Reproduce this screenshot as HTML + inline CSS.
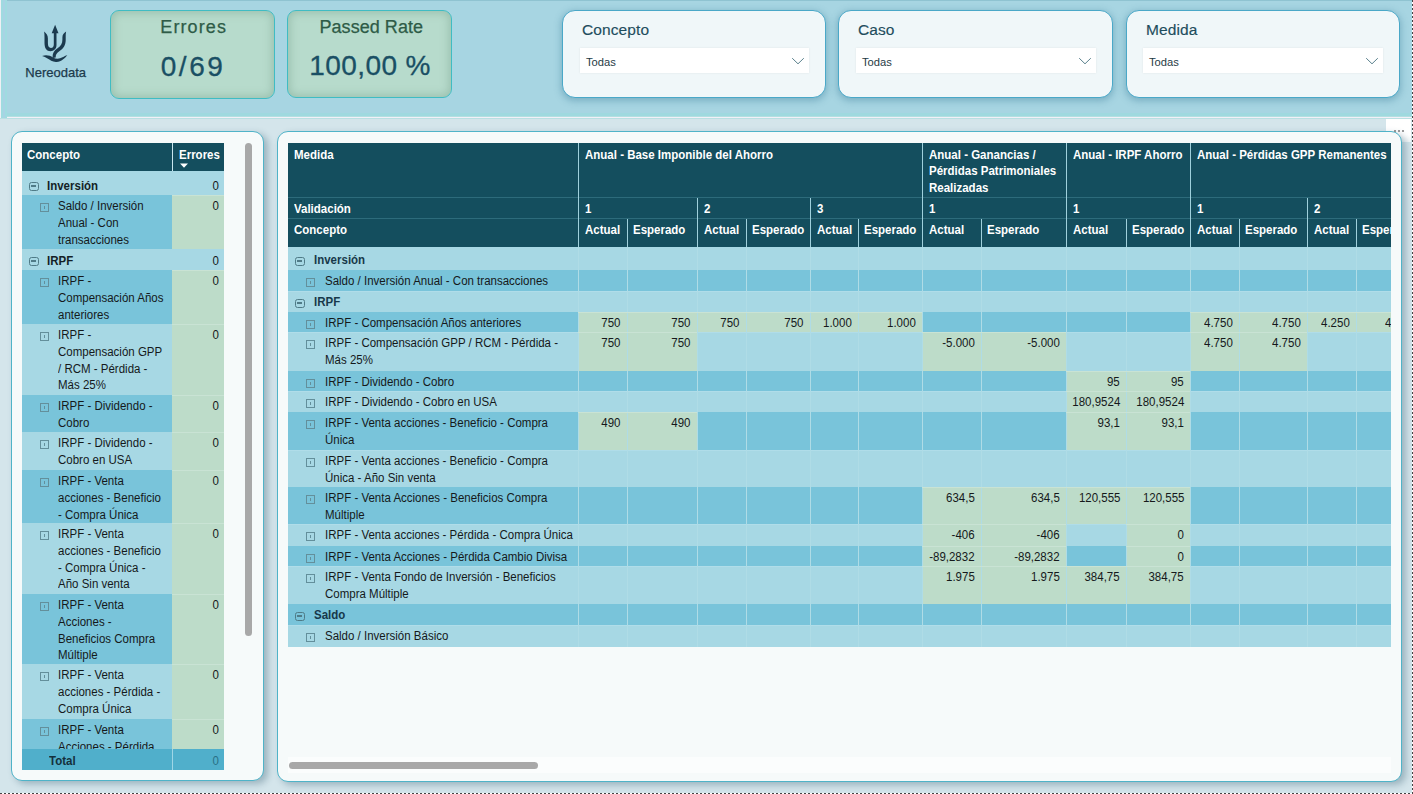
<!DOCTYPE html><html><head><meta charset="utf-8"><style>
html,body{margin:0;padding:0;}
body{width:1413px;height:794px;position:relative;overflow:hidden;background:#d4e5eb;font-family:"Liberation Sans",sans-serif;}
.t{position:absolute;white-space:nowrap;}
.tb .t.n{}
.r{position:absolute;}
.ico{position:absolute;box-sizing:border-box;}
</style></head><body>
<div class="r" style="left:0px;top:0px;width:1413px;height:117px;background:#a7d5e2;"></div>
<div class="r" style="left:0px;top:0px;width:1413px;height:1px;background:#8fc3d1;"></div>
<div class="r" style="left:0px;top:113px;width:1413px;height:3px;background:#9fd9df;"></div>
<div class="r" style="left:0px;top:116px;width:1413px;height:1px;background:#b3dfe0;"></div>
<div class="r" style="left:0px;top:117px;width:1413px;height:1px;background:#f2f0f8;"></div>
<div class="r" style="left:0px;top:118px;width:1413px;height:1px;background:#b9e0e2;"></div>
<div class="r" style="left:0px;top:119px;width:1413px;height:675px;background:#d4e5eb;"></div>
<div class="r" style="left:0px;top:0px;width:1px;height:118px;background:#eef0f4;"></div>
<div class="r" style="left:1px;top:0px;width:2px;height:118px;background:#9fdbe0;"></div>
<div class="r" style="left:3px;top:0px;width:2px;height:118px;background:#a8d3e4;"></div>
<div class="r" style="left:5px;top:0px;width:2px;height:118px;background:#9fdbe0;"></div>
<svg style="position:absolute;left:0;top:0" width="100" height="100" viewBox="0 0 100 100">
<g fill="#1b3a4e">
<path d="M44.1 31.6 C46.4 33.4 47.9 35.4 47.9 38.5 L47.9 43 C47.9 46.4 49 47.9 50.9 47.9 C52.9 47.9 53.8 46.5 53.8 44.5 L53.8 32.8 L56.5 32.8 L56.5 45 C56.5 49 53.6 51.2 50.5 51.2 C46.5 51.2 44.5 48.2 44.5 43 L44.5 37 C44.5 35 44.4 33.4 44.1 31.6 Z"/>
<path d="M66.1 31.6 C65.7 33.4 65.7 35 65.7 37 L65.7 40 C65.7 45 63.5 48.6 59.6 51.1 C56.6 53.1 55.6 54.6 55.7 57.6 L52.6 57.9 C52.3 53.6 54 50.6 57.5 48.3 C61 46 62.4 43.5 62.4 39.5 L62.4 37.5 C62.4 35 63.8 33 66.1 31.6 Z"/>
<path d="M42.1 56.1 C46 54.5 50 55.6 53 57.4 C56 59.2 59.5 59 62.5 57.3 C64.2 56.3 65.6 55.5 67.3 55.2 C65 57.9 61.5 61.6 56.5 61.9 C52.5 62.1 50 60.1 47.5 58.6 C45.8 57.5 44 56.5 42.1 56.1 Z"/>
<path d="M55.1 24.8 L58.5 33.3 L51.7 33.3 Z"/>
</g>
</svg>
<div class="t" style="left:25.30px;top:65.30px;font-size:13px;line-height:15px;font-weight:400;color:#1c3a4c;-webkit-text-stroke:0.25px #1c3a4c;">Nereodata</div>
<div class="r" style="left:110px;top:10px;width:165px;height:89px;box-sizing:border-box;border:1px solid #3fbcc3;border-radius:9px;background:#b7dbcc;box-shadow:inset 0 0 9px 2px rgba(120,160,140,0.45);"></div>
<div class="t" style="left:110.8px;width:165px;text-align:center;top:16px;font-size:18px;line-height:22px;color:#2e5b47;-webkit-text-stroke:0.25px #2e5b47;letter-spacing:1.1px;text-indent:0.8px">Errores</div>
<div class="t" style="left:110.4px;width:165px;text-align:center;top:50px;font-size:28px;line-height:34px;color:#1a4f64;-webkit-text-stroke:0.3px #1a4f64;letter-spacing:2.6px;text-indent:0.4px">0/69</div>
<div class="r" style="left:287px;top:10px;width:165px;height:88px;box-sizing:border-box;border:1px solid #3fbcc3;border-radius:9px;background:#b7dbcc;box-shadow:inset 0 0 9px 2px rgba(120,160,140,0.45);"></div>
<div class="t" style="left:288.2px;width:165px;text-align:center;top:16px;font-size:18px;line-height:22px;color:#2e5b47;-webkit-text-stroke:0.25px #2e5b47;letter-spacing:0.05px;text-indent:1.2px">Passed Rate</div>
<div class="t" style="left:287.4px;width:165px;text-align:center;top:49px;font-size:28px;line-height:34px;color:#1a4f64;-webkit-text-stroke:0.3px #1a4f64;letter-spacing:0.4px;text-indent:0.4px">100,00 %</div>
<div class="r" style="left:562px;top:10px;width:264px;height:88px;box-sizing:border-box;border:1px solid #4aa8c8;border-radius:13px;background:#f0f7f9;box-shadow:0 2px 7px 1px rgba(40,110,140,0.35);"></div>
<div class="t" style="left:582.00px;top:20.63px;font-size:15.5px;line-height:18px;font-weight:400;color:#1e4d5d;letter-spacing:0.1px;-webkit-text-stroke:0.15px #1e4d5d;">Concepto</div>
<div class="r" style="left:580px;top:48px;width:229px;height:25px;background:#ffffff;box-shadow:0 0 2px rgba(0,0,0,0.08);"></div>
<div class="t" style="left:586.00px;top:54.62px;font-size:11.2px;line-height:15px;font-weight:400;color:#1f3b45;">Todas</div>
<svg style="position:absolute;left:791px;top:55px" width="14" height="10" viewBox="0 0 14 10"><path d="M1.2 3.2 L7 8.8 L12.8 3.2" fill="none" stroke="#5a818d" stroke-width="1"/></svg>
<div class="r" style="left:838px;top:10px;width:275px;height:88px;box-sizing:border-box;border:1px solid #4aa8c8;border-radius:13px;background:#f0f7f9;box-shadow:0 2px 7px 1px rgba(40,110,140,0.35);"></div>
<div class="t" style="left:858.00px;top:20.63px;font-size:15.5px;line-height:18px;font-weight:400;color:#1e4d5d;letter-spacing:0.1px;-webkit-text-stroke:0.15px #1e4d5d;">Caso</div>
<div class="r" style="left:856px;top:48px;width:240px;height:25px;background:#ffffff;box-shadow:0 0 2px rgba(0,0,0,0.08);"></div>
<div class="t" style="left:862.00px;top:54.62px;font-size:11.2px;line-height:15px;font-weight:400;color:#1f3b45;">Todas</div>
<svg style="position:absolute;left:1078px;top:55px" width="14" height="10" viewBox="0 0 14 10"><path d="M1.2 3.2 L7 8.8 L12.8 3.2" fill="none" stroke="#5a818d" stroke-width="1"/></svg>
<div class="r" style="left:1126px;top:10px;width:274px;height:88px;box-sizing:border-box;border:1px solid #4aa8c8;border-radius:13px;background:#f0f7f9;box-shadow:0 2px 7px 1px rgba(40,110,140,0.35);"></div>
<div class="t" style="left:1146.00px;top:20.63px;font-size:15.5px;line-height:18px;font-weight:400;color:#1e4d5d;letter-spacing:0.1px;-webkit-text-stroke:0.15px #1e4d5d;">Medida</div>
<div class="r" style="left:1143px;top:48px;width:240px;height:25px;background:#ffffff;box-shadow:0 0 2px rgba(0,0,0,0.08);"></div>
<div class="t" style="left:1149.00px;top:54.62px;font-size:11.2px;line-height:15px;font-weight:400;color:#1f3b45;">Todas</div>
<svg style="position:absolute;left:1365px;top:55px" width="14" height="10" viewBox="0 0 14 10"><path d="M1.2 3.2 L7 8.8 L12.8 3.2" fill="none" stroke="#5a818d" stroke-width="1"/></svg>
<div class="r" style="left:1386px;top:119px;width:25px;height:23px;background:linear-gradient(to bottom,#ffffff 70%,#f1f6f7)"></div>
<div class="r" style="left:11px;top:131px;width:253px;height:650px;box-sizing:border-box;border:1px solid #4fb3c8;border-radius:11px;background:#f6fafa;box-shadow:4px 3px 7px rgba(40,80,100,0.33);"></div>
<div class="r" style="left:277px;top:131px;width:1125px;height:651px;box-sizing:border-box;border:1px solid #4fb3c8;border-radius:11px;background:#f6fafa;box-shadow:4px 3px 7px rgba(40,80,100,0.33);"></div>
<div class="r" style="left:1394px;top:130px;width:2.2px;height:2.2px;background:#777;border-radius:50%"></div>
<div class="r" style="left:1398px;top:130px;width:2.2px;height:2.2px;background:#777;border-radius:50%"></div>
<div class="r" style="left:1402px;top:130px;width:2.2px;height:2.2px;background:#777;border-radius:50%"></div>
<div class="r" style="left:22px;top:143px;width:202px;height:28px;background:#144e5e;"></div>
<div class="r" style="left:172px;top:143px;width:1px;height:28px;background:#c9e6ee;"></div>
<div class="t" style="left:27.00px;top:147.24px;font-size:12.3px;line-height:16.6px;font-weight:700;color:#ffffff;transform:scaleX(0.935);transform-origin:0 0;">Concepto</div>
<div class="t" style="left:179.40px;top:147.24px;font-size:12.3px;line-height:16.6px;font-weight:700;color:#ffffff;transform:scaleX(0.935);transform-origin:0 0;">Errores</div>
<svg style="position:absolute;left:179px;top:163px" width="10" height="6" viewBox="0 0 10 6"><path d="M1 0.5 L9 0.5 L5 4.8 Z" fill="#fff"/></svg>
<div class="r tb" style="left:22px;top:171px;width:202px;height:578px;overflow:hidden">
<div class="r" style="left:0px;top:0px;width:150px;height:24px;background:#a7d8e4;"></div>
<div class="r" style="left:150px;top:0px;width:52px;height:24px;background:#a7d8e4;"></div>
<div class="ico" style="left:7px;top:11px;width:9.5px;height:9px;border:1.4px solid #4f7b87;border-radius:2.5px;"><div style="position:absolute;left:0.8px;top:2.4px;width:5px;height:2px;background:#4f7b87"></div></div>
<div class="t" style="left:24.80px;top:7.24px;font-size:12.3px;line-height:16.6px;font-weight:700;color:#141f26;transform:scaleX(0.935);transform-origin:0 0;">Inversión</div>
<div class="t n" style="right:5.00px;top:7.24px;font-size:12.3px;line-height:16.6px;font-weight:400;color:#15191b;transform:scaleX(0.935);transform-origin:100% 0;">0</div>
<div class="r" style="left:0px;top:24px;width:150px;height:54px;background:#79c4da;"></div>
<div class="r" style="left:150px;top:24px;width:52px;height:54px;background:#bddcc9;"></div>
<div class="r" style="left:150px;top:24px;width:52px;height:1px;background:#c9e3d4;"></div>
<div class="ico" style="left:18px;top:32px;width:9px;height:8.5px;border:1px solid #638f9b;"><div style="position:absolute;left:3.3px;top:1.8px;width:1.2px;height:3.4px;background:#638f9b"></div></div>
<div class="t n" style="left:36.20px;top:27.24px;font-size:12.3px;line-height:16.6px;font-weight:400;color:#15191b;transform:scaleX(0.935);transform-origin:0 0;">Saldo / Inversión</div>
<div class="t n" style="left:36.20px;top:43.94px;font-size:12.3px;line-height:16.6px;font-weight:400;color:#15191b;transform:scaleX(0.935);transform-origin:0 0;">Anual - Con</div>
<div class="t n" style="left:36.20px;top:60.64px;font-size:12.3px;line-height:16.6px;font-weight:400;color:#15191b;transform:scaleX(0.935);transform-origin:0 0;">transacciones</div>
<div class="t n" style="right:5.00px;top:27.24px;font-size:12.3px;line-height:16.6px;font-weight:400;color:#15191b;transform:scaleX(0.935);transform-origin:100% 0;">0</div>
<div class="r" style="left:0px;top:78px;width:150px;height:21px;background:#a7d8e4;"></div>
<div class="r" style="left:150px;top:78px;width:52px;height:21px;background:#a7d8e4;"></div>
<div class="ico" style="left:7px;top:86px;width:9.5px;height:9px;border:1.4px solid #4f7b87;border-radius:2.5px;"><div style="position:absolute;left:0.8px;top:2.4px;width:5px;height:2px;background:#4f7b87"></div></div>
<div class="t" style="left:24.80px;top:81.74px;font-size:12.3px;line-height:16.6px;font-weight:700;color:#141f26;transform:scaleX(0.935);transform-origin:0 0;">IRPF</div>
<div class="t n" style="right:5.00px;top:81.74px;font-size:12.3px;line-height:16.6px;font-weight:400;color:#15191b;transform:scaleX(0.935);transform-origin:100% 0;">0</div>
<div class="r" style="left:0px;top:99px;width:150px;height:54px;background:#79c4da;"></div>
<div class="r" style="left:150px;top:99px;width:52px;height:54px;background:#bddcc9;"></div>
<div class="r" style="left:150px;top:99px;width:52px;height:1px;background:#c9e3d4;"></div>
<div class="ico" style="left:18px;top:107px;width:9px;height:8.5px;border:1px solid #638f9b;"><div style="position:absolute;left:3.3px;top:1.8px;width:1.2px;height:3.4px;background:#638f9b"></div></div>
<div class="t n" style="left:36.20px;top:102.24px;font-size:12.3px;line-height:16.6px;font-weight:400;color:#15191b;transform:scaleX(0.935);transform-origin:0 0;">IRPF -</div>
<div class="t n" style="left:36.20px;top:118.94px;font-size:12.3px;line-height:16.6px;font-weight:400;color:#15191b;transform:scaleX(0.935);transform-origin:0 0;">Compensación Años</div>
<div class="t n" style="left:36.20px;top:135.64px;font-size:12.3px;line-height:16.6px;font-weight:400;color:#15191b;transform:scaleX(0.935);transform-origin:0 0;">anteriores</div>
<div class="t n" style="right:5.00px;top:102.24px;font-size:12.3px;line-height:16.6px;font-weight:400;color:#15191b;transform:scaleX(0.935);transform-origin:100% 0;">0</div>
<div class="r" style="left:0px;top:153px;width:150px;height:71px;background:#a7d8e4;"></div>
<div class="r" style="left:150px;top:153px;width:52px;height:71px;background:#bddcc9;"></div>
<div class="r" style="left:150px;top:153px;width:52px;height:1px;background:#c9e3d4;"></div>
<div class="ico" style="left:18px;top:161px;width:9px;height:8.5px;border:1px solid #638f9b;"><div style="position:absolute;left:3.3px;top:1.8px;width:1.2px;height:3.4px;background:#638f9b"></div></div>
<div class="t n" style="left:36.20px;top:156.24px;font-size:12.3px;line-height:16.6px;font-weight:400;color:#15191b;transform:scaleX(0.935);transform-origin:0 0;">IRPF -</div>
<div class="t n" style="left:36.20px;top:172.94px;font-size:12.3px;line-height:16.6px;font-weight:400;color:#15191b;transform:scaleX(0.935);transform-origin:0 0;">Compensación GPP</div>
<div class="t n" style="left:36.20px;top:189.64px;font-size:12.3px;line-height:16.6px;font-weight:400;color:#15191b;transform:scaleX(0.935);transform-origin:0 0;">/ RCM - Pérdida -</div>
<div class="t n" style="left:36.20px;top:206.34px;font-size:12.3px;line-height:16.6px;font-weight:400;color:#15191b;transform:scaleX(0.935);transform-origin:0 0;">Más 25%</div>
<div class="t n" style="right:5.00px;top:156.24px;font-size:12.3px;line-height:16.6px;font-weight:400;color:#15191b;transform:scaleX(0.935);transform-origin:100% 0;">0</div>
<div class="r" style="left:0px;top:224px;width:150px;height:37px;background:#79c4da;"></div>
<div class="r" style="left:150px;top:224px;width:52px;height:37px;background:#bddcc9;"></div>
<div class="r" style="left:150px;top:224px;width:52px;height:1px;background:#c9e3d4;"></div>
<div class="ico" style="left:18px;top:232px;width:9px;height:8.5px;border:1px solid #638f9b;"><div style="position:absolute;left:3.3px;top:1.8px;width:1.2px;height:3.4px;background:#638f9b"></div></div>
<div class="t n" style="left:36.20px;top:227.24px;font-size:12.3px;line-height:16.6px;font-weight:400;color:#15191b;transform:scaleX(0.935);transform-origin:0 0;">IRPF - Dividendo -</div>
<div class="t n" style="left:36.20px;top:243.94px;font-size:12.3px;line-height:16.6px;font-weight:400;color:#15191b;transform:scaleX(0.935);transform-origin:0 0;">Cobro</div>
<div class="t n" style="right:5.00px;top:227.24px;font-size:12.3px;line-height:16.6px;font-weight:400;color:#15191b;transform:scaleX(0.935);transform-origin:100% 0;">0</div>
<div class="r" style="left:0px;top:261px;width:150px;height:38px;background:#a7d8e4;"></div>
<div class="r" style="left:150px;top:261px;width:52px;height:38px;background:#bddcc9;"></div>
<div class="r" style="left:150px;top:261px;width:52px;height:1px;background:#c9e3d4;"></div>
<div class="ico" style="left:18px;top:269px;width:9px;height:8.5px;border:1px solid #638f9b;"><div style="position:absolute;left:3.3px;top:1.8px;width:1.2px;height:3.4px;background:#638f9b"></div></div>
<div class="t n" style="left:36.20px;top:264.24px;font-size:12.3px;line-height:16.6px;font-weight:400;color:#15191b;transform:scaleX(0.935);transform-origin:0 0;">IRPF - Dividendo -</div>
<div class="t n" style="left:36.20px;top:280.94px;font-size:12.3px;line-height:16.6px;font-weight:400;color:#15191b;transform:scaleX(0.935);transform-origin:0 0;">Cobro en USA</div>
<div class="t n" style="right:5.00px;top:264.24px;font-size:12.3px;line-height:16.6px;font-weight:400;color:#15191b;transform:scaleX(0.935);transform-origin:100% 0;">0</div>
<div class="r" style="left:0px;top:299px;width:150px;height:53px;background:#79c4da;"></div>
<div class="r" style="left:150px;top:299px;width:52px;height:53px;background:#bddcc9;"></div>
<div class="r" style="left:150px;top:299px;width:52px;height:1px;background:#c9e3d4;"></div>
<div class="ico" style="left:18px;top:307px;width:9px;height:8.5px;border:1px solid #638f9b;"><div style="position:absolute;left:3.3px;top:1.8px;width:1.2px;height:3.4px;background:#638f9b"></div></div>
<div class="t n" style="left:36.20px;top:302.24px;font-size:12.3px;line-height:16.6px;font-weight:400;color:#15191b;transform:scaleX(0.935);transform-origin:0 0;">IRPF - Venta</div>
<div class="t n" style="left:36.20px;top:318.94px;font-size:12.3px;line-height:16.6px;font-weight:400;color:#15191b;transform:scaleX(0.935);transform-origin:0 0;">acciones - Beneficio</div>
<div class="t n" style="left:36.20px;top:335.64px;font-size:12.3px;line-height:16.6px;font-weight:400;color:#15191b;transform:scaleX(0.935);transform-origin:0 0;">- Compra Única</div>
<div class="t n" style="right:5.00px;top:302.24px;font-size:12.3px;line-height:16.6px;font-weight:400;color:#15191b;transform:scaleX(0.935);transform-origin:100% 0;">0</div>
<div class="r" style="left:0px;top:352px;width:150px;height:71px;background:#a7d8e4;"></div>
<div class="r" style="left:150px;top:352px;width:52px;height:71px;background:#bddcc9;"></div>
<div class="r" style="left:150px;top:352px;width:52px;height:1px;background:#c9e3d4;"></div>
<div class="ico" style="left:18px;top:360px;width:9px;height:8.5px;border:1px solid #638f9b;"><div style="position:absolute;left:3.3px;top:1.8px;width:1.2px;height:3.4px;background:#638f9b"></div></div>
<div class="t n" style="left:36.20px;top:355.24px;font-size:12.3px;line-height:16.6px;font-weight:400;color:#15191b;transform:scaleX(0.935);transform-origin:0 0;">IRPF - Venta</div>
<div class="t n" style="left:36.20px;top:371.94px;font-size:12.3px;line-height:16.6px;font-weight:400;color:#15191b;transform:scaleX(0.935);transform-origin:0 0;">acciones - Beneficio</div>
<div class="t n" style="left:36.20px;top:388.64px;font-size:12.3px;line-height:16.6px;font-weight:400;color:#15191b;transform:scaleX(0.935);transform-origin:0 0;">- Compra Única -</div>
<div class="t n" style="left:36.20px;top:405.34px;font-size:12.3px;line-height:16.6px;font-weight:400;color:#15191b;transform:scaleX(0.935);transform-origin:0 0;">Año Sin venta</div>
<div class="t n" style="right:5.00px;top:355.24px;font-size:12.3px;line-height:16.6px;font-weight:400;color:#15191b;transform:scaleX(0.935);transform-origin:100% 0;">0</div>
<div class="r" style="left:0px;top:423px;width:150px;height:70px;background:#79c4da;"></div>
<div class="r" style="left:150px;top:423px;width:52px;height:70px;background:#bddcc9;"></div>
<div class="r" style="left:150px;top:423px;width:52px;height:1px;background:#c9e3d4;"></div>
<div class="ico" style="left:18px;top:431px;width:9px;height:8.5px;border:1px solid #638f9b;"><div style="position:absolute;left:3.3px;top:1.8px;width:1.2px;height:3.4px;background:#638f9b"></div></div>
<div class="t n" style="left:36.20px;top:426.24px;font-size:12.3px;line-height:16.6px;font-weight:400;color:#15191b;transform:scaleX(0.935);transform-origin:0 0;">IRPF - Venta</div>
<div class="t n" style="left:36.20px;top:442.94px;font-size:12.3px;line-height:16.6px;font-weight:400;color:#15191b;transform:scaleX(0.935);transform-origin:0 0;">Acciones -</div>
<div class="t n" style="left:36.20px;top:459.64px;font-size:12.3px;line-height:16.6px;font-weight:400;color:#15191b;transform:scaleX(0.935);transform-origin:0 0;">Beneficios Compra</div>
<div class="t n" style="left:36.20px;top:476.34px;font-size:12.3px;line-height:16.6px;font-weight:400;color:#15191b;transform:scaleX(0.935);transform-origin:0 0;">Múltiple</div>
<div class="t n" style="right:5.00px;top:426.24px;font-size:12.3px;line-height:16.6px;font-weight:400;color:#15191b;transform:scaleX(0.935);transform-origin:100% 0;">0</div>
<div class="r" style="left:0px;top:493px;width:150px;height:55px;background:#a7d8e4;"></div>
<div class="r" style="left:150px;top:493px;width:52px;height:55px;background:#bddcc9;"></div>
<div class="r" style="left:150px;top:493px;width:52px;height:1px;background:#c9e3d4;"></div>
<div class="ico" style="left:18px;top:501px;width:9px;height:8.5px;border:1px solid #638f9b;"><div style="position:absolute;left:3.3px;top:1.8px;width:1.2px;height:3.4px;background:#638f9b"></div></div>
<div class="t n" style="left:36.20px;top:496.24px;font-size:12.3px;line-height:16.6px;font-weight:400;color:#15191b;transform:scaleX(0.935);transform-origin:0 0;">IRPF - Venta</div>
<div class="t n" style="left:36.20px;top:512.94px;font-size:12.3px;line-height:16.6px;font-weight:400;color:#15191b;transform:scaleX(0.935);transform-origin:0 0;">acciones - Pérdida -</div>
<div class="t n" style="left:36.20px;top:529.64px;font-size:12.3px;line-height:16.6px;font-weight:400;color:#15191b;transform:scaleX(0.935);transform-origin:0 0;">Compra Única</div>
<div class="t n" style="right:5.00px;top:496.24px;font-size:12.3px;line-height:16.6px;font-weight:400;color:#15191b;transform:scaleX(0.935);transform-origin:100% 0;">0</div>
<div class="r" style="left:0px;top:548px;width:150px;height:30px;background:#79c4da;"></div>
<div class="r" style="left:150px;top:548px;width:52px;height:30px;background:#bddcc9;"></div>
<div class="r" style="left:150px;top:548px;width:52px;height:1px;background:#c9e3d4;"></div>
<div class="ico" style="left:18px;top:556px;width:9px;height:8.5px;border:1px solid #638f9b;"><div style="position:absolute;left:3.3px;top:1.8px;width:1.2px;height:3.4px;background:#638f9b"></div></div>
<div class="t n" style="left:36.20px;top:551.24px;font-size:12.3px;line-height:16.6px;font-weight:400;color:#15191b;transform:scaleX(0.935);transform-origin:0 0;">IRPF - Venta</div>
<div class="t n" style="left:36.20px;top:567.94px;font-size:12.3px;line-height:16.6px;font-weight:400;color:#15191b;transform:scaleX(0.935);transform-origin:0 0;">Acciones - Pérdida</div>
<div class="t n" style="right:5.00px;top:551.24px;font-size:12.3px;line-height:16.6px;font-weight:400;color:#15191b;transform:scaleX(0.935);transform-origin:100% 0;">0</div>
</div>
<div class="r" style="left:22px;top:749px;width:202px;height:21px;background:#50afcb;"></div>
<div class="r" style="left:172px;top:749px;width:1px;height:21px;background:#9fd6e6;"></div>
<div class="t" style="left:48.60px;top:753.24px;font-size:12.3px;line-height:16.6px;font-weight:700;color:#14303c;transform:scaleX(0.935);transform-origin:0 0;">Total</div>
<div class="t n" style="right:1194.00px;top:753.24px;font-size:12.3px;line-height:16.6px;font-weight:400;color:#2a6f86;transform:scaleX(0.935);transform-origin:100% 0;">0</div>
<div class="r" style="left:245px;top:143px;width:7px;height:493px;background:#a8a8a8;border-radius:4px"></div>
<div class="r tb" style="left:288px;top:143px;width:1103px;height:504px;overflow:hidden">
<div class="r" style="left:0px;top:0px;width:1132px;height:104px;background:#144e5e;"></div>
<div class="r" style="left:0px;top:54px;width:1132px;height:1px;background:#2d6b7b;"></div>
<div class="r" style="left:0px;top:75px;width:1132px;height:1px;background:#2d6b7b;"></div>
<div class="r" style="left:290px;top:0px;width:1px;height:104px;background:#9fd0dc;"></div>
<div class="r" style="left:634px;top:0px;width:1px;height:104px;background:#9fd0dc;"></div>
<div class="r" style="left:778px;top:0px;width:1px;height:104px;background:#9fd0dc;"></div>
<div class="r" style="left:902px;top:0px;width:1px;height:104px;background:#9fd0dc;"></div>
<div class="r" style="left:409px;top:55px;width:1px;height:49px;background:#9fd0dc;"></div>
<div class="r" style="left:522px;top:55px;width:1px;height:49px;background:#9fd0dc;"></div>
<div class="r" style="left:1019px;top:55px;width:1px;height:49px;background:#9fd0dc;"></div>
<div class="r" style="left:339px;top:76px;width:1px;height:28px;background:#9fd0dc;"></div>
<div class="r" style="left:458px;top:76px;width:1px;height:28px;background:#9fd0dc;"></div>
<div class="r" style="left:570px;top:76px;width:1px;height:28px;background:#9fd0dc;"></div>
<div class="r" style="left:693px;top:76px;width:1px;height:28px;background:#9fd0dc;"></div>
<div class="r" style="left:838px;top:76px;width:1px;height:28px;background:#9fd0dc;"></div>
<div class="r" style="left:951px;top:76px;width:1px;height:28px;background:#9fd0dc;"></div>
<div class="r" style="left:1068px;top:76px;width:1px;height:28px;background:#9fd0dc;"></div>
<div class="t" style="left:5.80px;top:3.84px;font-size:12.3px;line-height:16.6px;font-weight:700;color:#ffffff;transform:scaleX(0.935);transform-origin:0 0;">Medida</div>
<div class="t" style="left:5.80px;top:58.14px;font-size:12.3px;line-height:16.6px;font-weight:700;color:#ffffff;transform:scaleX(0.935);transform-origin:0 0;">Validación</div>
<div class="t" style="left:5.80px;top:78.74px;font-size:12.3px;line-height:16.6px;font-weight:700;color:#ffffff;transform:scaleX(0.935);transform-origin:0 0;">Concepto</div>
<div class="t" style="left:297.00px;top:3.84px;font-size:12.3px;line-height:16.6px;font-weight:700;color:#ffffff;transform:scaleX(0.935);transform-origin:0 0;">Anual - Base Imponible del Ahorro</div>
<div class="t" style="left:641.00px;top:3.84px;font-size:12.3px;line-height:16.6px;font-weight:700;color:#ffffff;transform:scaleX(0.935);transform-origin:0 0;">Anual - Ganancias /</div>
<div class="t" style="left:641.00px;top:20.24px;font-size:12.3px;line-height:16.6px;font-weight:700;color:#ffffff;transform:scaleX(0.935);transform-origin:0 0;">Pérdidas Patrimoniales</div>
<div class="t" style="left:641.00px;top:36.64px;font-size:12.3px;line-height:16.6px;font-weight:700;color:#ffffff;transform:scaleX(0.935);transform-origin:0 0;">Realizadas</div>
<div class="t" style="left:784.50px;top:3.84px;font-size:12.3px;line-height:16.6px;font-weight:700;color:#ffffff;transform:scaleX(0.935);transform-origin:0 0;">Anual - IRPF Ahorro</div>
<div class="t" style="left:909.00px;top:3.84px;font-size:12.3px;line-height:16.6px;font-weight:700;color:#ffffff;transform:scaleX(0.935);transform-origin:0 0;">Anual - Pérdidas GPP Remanentes</div>
<div class="t" style="left:297.00px;top:58.14px;font-size:12.3px;line-height:16.6px;font-weight:700;color:#ffffff;transform:scaleX(0.935);transform-origin:0 0;">1</div>
<div class="t" style="left:416.00px;top:58.14px;font-size:12.3px;line-height:16.6px;font-weight:700;color:#ffffff;transform:scaleX(0.935);transform-origin:0 0;">2</div>
<div class="t" style="left:529.00px;top:58.14px;font-size:12.3px;line-height:16.6px;font-weight:700;color:#ffffff;transform:scaleX(0.935);transform-origin:0 0;">3</div>
<div class="t" style="left:641.00px;top:58.14px;font-size:12.3px;line-height:16.6px;font-weight:700;color:#ffffff;transform:scaleX(0.935);transform-origin:0 0;">1</div>
<div class="t" style="left:784.50px;top:58.14px;font-size:12.3px;line-height:16.6px;font-weight:700;color:#ffffff;transform:scaleX(0.935);transform-origin:0 0;">1</div>
<div class="t" style="left:909.00px;top:58.14px;font-size:12.3px;line-height:16.6px;font-weight:700;color:#ffffff;transform:scaleX(0.935);transform-origin:0 0;">1</div>
<div class="t" style="left:1026.00px;top:58.14px;font-size:12.3px;line-height:16.6px;font-weight:700;color:#ffffff;transform:scaleX(0.935);transform-origin:0 0;">2</div>
<div class="t" style="left:296.50px;top:78.74px;font-size:12.3px;line-height:16.6px;font-weight:700;color:#ffffff;transform:scaleX(0.935);transform-origin:0 0;">Actual</div>
<div class="t" style="left:344.50px;top:78.74px;font-size:12.3px;line-height:16.6px;font-weight:700;color:#ffffff;transform:scaleX(0.935);transform-origin:0 0;">Esperado</div>
<div class="t" style="left:415.50px;top:78.74px;font-size:12.3px;line-height:16.6px;font-weight:700;color:#ffffff;transform:scaleX(0.935);transform-origin:0 0;">Actual</div>
<div class="t" style="left:463.50px;top:78.74px;font-size:12.3px;line-height:16.6px;font-weight:700;color:#ffffff;transform:scaleX(0.935);transform-origin:0 0;">Esperado</div>
<div class="t" style="left:528.50px;top:78.74px;font-size:12.3px;line-height:16.6px;font-weight:700;color:#ffffff;transform:scaleX(0.935);transform-origin:0 0;">Actual</div>
<div class="t" style="left:575.50px;top:78.74px;font-size:12.3px;line-height:16.6px;font-weight:700;color:#ffffff;transform:scaleX(0.935);transform-origin:0 0;">Esperado</div>
<div class="t" style="left:640.50px;top:78.74px;font-size:12.3px;line-height:16.6px;font-weight:700;color:#ffffff;transform:scaleX(0.935);transform-origin:0 0;">Actual</div>
<div class="t" style="left:698.50px;top:78.74px;font-size:12.3px;line-height:16.6px;font-weight:700;color:#ffffff;transform:scaleX(0.935);transform-origin:0 0;">Esperado</div>
<div class="t" style="left:784.50px;top:78.74px;font-size:12.3px;line-height:16.6px;font-weight:700;color:#ffffff;transform:scaleX(0.935);transform-origin:0 0;">Actual</div>
<div class="t" style="left:843.50px;top:78.74px;font-size:12.3px;line-height:16.6px;font-weight:700;color:#ffffff;transform:scaleX(0.935);transform-origin:0 0;">Esperado</div>
<div class="t" style="left:908.50px;top:78.74px;font-size:12.3px;line-height:16.6px;font-weight:700;color:#ffffff;transform:scaleX(0.935);transform-origin:0 0;">Actual</div>
<div class="t" style="left:956.50px;top:78.74px;font-size:12.3px;line-height:16.6px;font-weight:700;color:#ffffff;transform:scaleX(0.935);transform-origin:0 0;">Esperado</div>
<div class="t" style="left:1025.50px;top:78.74px;font-size:12.3px;line-height:16.6px;font-weight:700;color:#ffffff;transform:scaleX(0.935);transform-origin:0 0;">Actual</div>
<div class="t" style="left:1073.50px;top:78.74px;font-size:12.3px;line-height:16.6px;font-weight:700;color:#ffffff;transform:scaleX(0.935);transform-origin:0 0;">Esperado</div>
<div class="r" style="left:0px;top:104px;width:1132px;height:23px;background:#a7d8e4;"></div>
<div class="r" style="left:290px;top:104px;width:1px;height:23px;background:#afdce6;"></div>
<div class="r" style="left:339px;top:104px;width:1px;height:23px;background:#afdce6;"></div>
<div class="r" style="left:409px;top:104px;width:1px;height:23px;background:#afdce6;"></div>
<div class="r" style="left:458px;top:104px;width:1px;height:23px;background:#afdce6;"></div>
<div class="r" style="left:522px;top:104px;width:1px;height:23px;background:#afdce6;"></div>
<div class="r" style="left:570px;top:104px;width:1px;height:23px;background:#afdce6;"></div>
<div class="r" style="left:634px;top:104px;width:1px;height:23px;background:#afdce6;"></div>
<div class="r" style="left:693px;top:104px;width:1px;height:23px;background:#afdce6;"></div>
<div class="r" style="left:778px;top:104px;width:1px;height:23px;background:#afdce6;"></div>
<div class="r" style="left:838px;top:104px;width:1px;height:23px;background:#afdce6;"></div>
<div class="r" style="left:902px;top:104px;width:1px;height:23px;background:#afdce6;"></div>
<div class="r" style="left:951px;top:104px;width:1px;height:23px;background:#afdce6;"></div>
<div class="r" style="left:1019px;top:104px;width:1px;height:23px;background:#afdce6;"></div>
<div class="r" style="left:1068px;top:104px;width:1px;height:23px;background:#afdce6;"></div>
<div class="ico" style="left:7px;top:113.5px;width:9.5px;height:9px;border:1.4px solid #4f7b87;border-radius:2.5px;"><div style="position:absolute;left:0.8px;top:2.4px;width:5px;height:2px;background:#4f7b87"></div></div>
<div class="t" style="left:26.00px;top:109.04px;font-size:12.3px;line-height:16.6px;font-weight:700;color:#17384a;transform:scaleX(0.935);transform-origin:0 0;">Inversión</div>
<div class="r" style="left:0px;top:127px;width:1132px;height:21px;background:#79c4da;"></div>
<div class="r" style="left:290px;top:127px;width:1px;height:21px;background:#afdce6;"></div>
<div class="r" style="left:339px;top:127px;width:1px;height:21px;background:#afdce6;"></div>
<div class="r" style="left:409px;top:127px;width:1px;height:21px;background:#afdce6;"></div>
<div class="r" style="left:458px;top:127px;width:1px;height:21px;background:#afdce6;"></div>
<div class="r" style="left:522px;top:127px;width:1px;height:21px;background:#afdce6;"></div>
<div class="r" style="left:570px;top:127px;width:1px;height:21px;background:#afdce6;"></div>
<div class="r" style="left:634px;top:127px;width:1px;height:21px;background:#afdce6;"></div>
<div class="r" style="left:693px;top:127px;width:1px;height:21px;background:#afdce6;"></div>
<div class="r" style="left:778px;top:127px;width:1px;height:21px;background:#afdce6;"></div>
<div class="r" style="left:838px;top:127px;width:1px;height:21px;background:#afdce6;"></div>
<div class="r" style="left:902px;top:127px;width:1px;height:21px;background:#afdce6;"></div>
<div class="r" style="left:951px;top:127px;width:1px;height:21px;background:#afdce6;"></div>
<div class="r" style="left:1019px;top:127px;width:1px;height:21px;background:#afdce6;"></div>
<div class="r" style="left:1068px;top:127px;width:1px;height:21px;background:#afdce6;"></div>
<div class="ico" style="left:18px;top:135px;width:9px;height:8.5px;border:1px solid #638f9b;"><div style="position:absolute;left:3.3px;top:1.8px;width:1.2px;height:3.4px;background:#638f9b"></div></div>
<div class="t n" style="left:37.00px;top:130.24px;font-size:12.3px;line-height:16.6px;font-weight:400;color:#15191b;transform:scaleX(0.935);transform-origin:0 0;">Saldo / Inversión Anual - Con transacciones</div>
<div class="r" style="left:0px;top:148px;width:1132px;height:21px;background:#a7d8e4;"></div>
<div class="r" style="left:0px;top:148px;width:1132px;height:1px;background:#b0dde9;"></div>
<div class="r" style="left:290px;top:148px;width:1px;height:21px;background:#afdce6;"></div>
<div class="r" style="left:339px;top:148px;width:1px;height:21px;background:#afdce6;"></div>
<div class="r" style="left:409px;top:148px;width:1px;height:21px;background:#afdce6;"></div>
<div class="r" style="left:458px;top:148px;width:1px;height:21px;background:#afdce6;"></div>
<div class="r" style="left:522px;top:148px;width:1px;height:21px;background:#afdce6;"></div>
<div class="r" style="left:570px;top:148px;width:1px;height:21px;background:#afdce6;"></div>
<div class="r" style="left:634px;top:148px;width:1px;height:21px;background:#afdce6;"></div>
<div class="r" style="left:693px;top:148px;width:1px;height:21px;background:#afdce6;"></div>
<div class="r" style="left:778px;top:148px;width:1px;height:21px;background:#afdce6;"></div>
<div class="r" style="left:838px;top:148px;width:1px;height:21px;background:#afdce6;"></div>
<div class="r" style="left:902px;top:148px;width:1px;height:21px;background:#afdce6;"></div>
<div class="r" style="left:951px;top:148px;width:1px;height:21px;background:#afdce6;"></div>
<div class="r" style="left:1019px;top:148px;width:1px;height:21px;background:#afdce6;"></div>
<div class="r" style="left:1068px;top:148px;width:1px;height:21px;background:#afdce6;"></div>
<div class="ico" style="left:7px;top:156px;width:9.5px;height:9px;border:1.4px solid #4f7b87;border-radius:2.5px;"><div style="position:absolute;left:0.8px;top:2.4px;width:5px;height:2px;background:#4f7b87"></div></div>
<div class="t" style="left:26.00px;top:151.24px;font-size:12.3px;line-height:16.6px;font-weight:700;color:#17384a;transform:scaleX(0.935);transform-origin:0 0;">IRPF</div>
<div class="r" style="left:0px;top:169px;width:1132px;height:20px;background:#79c4da;"></div>
<div class="r" style="left:290px;top:169px;width:49px;height:20px;background:#bddcc9;"></div>
<div class="r" style="left:339px;top:169px;width:70px;height:20px;background:#bddcc9;"></div>
<div class="r" style="left:409px;top:169px;width:49px;height:20px;background:#bddcc9;"></div>
<div class="r" style="left:458px;top:169px;width:64px;height:20px;background:#bddcc9;"></div>
<div class="r" style="left:522px;top:169px;width:48px;height:20px;background:#bddcc9;"></div>
<div class="r" style="left:570px;top:169px;width:64px;height:20px;background:#bddcc9;"></div>
<div class="r" style="left:902px;top:169px;width:49px;height:20px;background:#bddcc9;"></div>
<div class="r" style="left:951px;top:169px;width:68px;height:20px;background:#bddcc9;"></div>
<div class="r" style="left:1019px;top:169px;width:49px;height:20px;background:#bddcc9;"></div>
<div class="r" style="left:1068px;top:169px;width:64px;height:20px;background:#bddcc9;"></div>
<div class="r" style="left:290px;top:169px;width:1px;height:20px;background:#afdce6;"></div>
<div class="r" style="left:339px;top:169px;width:1px;height:20px;background:#afdce6;"></div>
<div class="r" style="left:409px;top:169px;width:1px;height:20px;background:#afdce6;"></div>
<div class="r" style="left:458px;top:169px;width:1px;height:20px;background:#afdce6;"></div>
<div class="r" style="left:522px;top:169px;width:1px;height:20px;background:#afdce6;"></div>
<div class="r" style="left:570px;top:169px;width:1px;height:20px;background:#afdce6;"></div>
<div class="r" style="left:634px;top:169px;width:1px;height:20px;background:#afdce6;"></div>
<div class="r" style="left:693px;top:169px;width:1px;height:20px;background:#afdce6;"></div>
<div class="r" style="left:778px;top:169px;width:1px;height:20px;background:#afdce6;"></div>
<div class="r" style="left:838px;top:169px;width:1px;height:20px;background:#afdce6;"></div>
<div class="r" style="left:902px;top:169px;width:1px;height:20px;background:#afdce6;"></div>
<div class="r" style="left:951px;top:169px;width:1px;height:20px;background:#afdce6;"></div>
<div class="r" style="left:1019px;top:169px;width:1px;height:20px;background:#afdce6;"></div>
<div class="r" style="left:1068px;top:169px;width:1px;height:20px;background:#afdce6;"></div>
<div class="r" style="left:290px;top:169px;width:49px;height:1px;background:#c9e3d4;"></div>
<div class="r" style="left:339px;top:169px;width:70px;height:1px;background:#c9e3d4;"></div>
<div class="r" style="left:409px;top:169px;width:49px;height:1px;background:#c9e3d4;"></div>
<div class="r" style="left:458px;top:169px;width:64px;height:1px;background:#c9e3d4;"></div>
<div class="r" style="left:522px;top:169px;width:48px;height:1px;background:#c9e3d4;"></div>
<div class="r" style="left:570px;top:169px;width:64px;height:1px;background:#c9e3d4;"></div>
<div class="r" style="left:902px;top:169px;width:49px;height:1px;background:#c9e3d4;"></div>
<div class="r" style="left:951px;top:169px;width:68px;height:1px;background:#c9e3d4;"></div>
<div class="r" style="left:1019px;top:169px;width:49px;height:1px;background:#c9e3d4;"></div>
<div class="r" style="left:1068px;top:169px;width:64px;height:1px;background:#c9e3d4;"></div>
<div class="ico" style="left:18px;top:177px;width:9px;height:8.5px;border:1px solid #638f9b;"><div style="position:absolute;left:3.3px;top:1.8px;width:1.2px;height:3.4px;background:#638f9b"></div></div>
<div class="t n" style="left:37.00px;top:172.24px;font-size:12.3px;line-height:16.6px;font-weight:400;color:#15191b;transform:scaleX(0.935);transform-origin:0 0;">IRPF - Compensación Años anteriores</div>
<div class="t n" style="right:770.00px;top:172.24px;font-size:12.3px;line-height:16.6px;font-weight:400;color:#15191b;transform:scaleX(0.935);transform-origin:100% 0">750</div>
<div class="t n" style="right:700.00px;top:172.24px;font-size:12.3px;line-height:16.6px;font-weight:400;color:#15191b;transform:scaleX(0.935);transform-origin:100% 0">750</div>
<div class="t n" style="right:651.00px;top:172.24px;font-size:12.3px;line-height:16.6px;font-weight:400;color:#15191b;transform:scaleX(0.935);transform-origin:100% 0">750</div>
<div class="t n" style="right:587.00px;top:172.24px;font-size:12.3px;line-height:16.6px;font-weight:400;color:#15191b;transform:scaleX(0.935);transform-origin:100% 0">750</div>
<div class="t n" style="right:539.00px;top:172.24px;font-size:12.3px;line-height:16.6px;font-weight:400;color:#15191b;transform:scaleX(0.935);transform-origin:100% 0">1.000</div>
<div class="t n" style="right:475.00px;top:172.24px;font-size:12.3px;line-height:16.6px;font-weight:400;color:#15191b;transform:scaleX(0.935);transform-origin:100% 0">1.000</div>
<div class="t n" style="right:158.00px;top:172.24px;font-size:12.3px;line-height:16.6px;font-weight:400;color:#15191b;transform:scaleX(0.935);transform-origin:100% 0">4.750</div>
<div class="t n" style="right:90.00px;top:172.24px;font-size:12.3px;line-height:16.6px;font-weight:400;color:#15191b;transform:scaleX(0.935);transform-origin:100% 0">4.750</div>
<div class="t n" style="right:41.00px;top:172.24px;font-size:12.3px;line-height:16.6px;font-weight:400;color:#15191b;transform:scaleX(0.935);transform-origin:100% 0">4.250</div>
<div class="t n" style="right:-23.00px;top:172.24px;font-size:12.3px;line-height:16.6px;font-weight:400;color:#15191b;transform:scaleX(0.935);transform-origin:100% 0">4.250</div>
<div class="r" style="left:0px;top:189px;width:1132px;height:39px;background:#a7d8e4;"></div>
<div class="r" style="left:0px;top:189px;width:1132px;height:1px;background:#b0dde9;"></div>
<div class="r" style="left:290px;top:189px;width:49px;height:39px;background:#bddcc9;"></div>
<div class="r" style="left:339px;top:189px;width:70px;height:39px;background:#bddcc9;"></div>
<div class="r" style="left:634px;top:189px;width:59px;height:39px;background:#bddcc9;"></div>
<div class="r" style="left:693px;top:189px;width:85px;height:39px;background:#bddcc9;"></div>
<div class="r" style="left:902px;top:189px;width:49px;height:39px;background:#bddcc9;"></div>
<div class="r" style="left:951px;top:189px;width:68px;height:39px;background:#bddcc9;"></div>
<div class="r" style="left:290px;top:189px;width:1px;height:39px;background:#afdce6;"></div>
<div class="r" style="left:339px;top:189px;width:1px;height:39px;background:#afdce6;"></div>
<div class="r" style="left:409px;top:189px;width:1px;height:39px;background:#afdce6;"></div>
<div class="r" style="left:458px;top:189px;width:1px;height:39px;background:#afdce6;"></div>
<div class="r" style="left:522px;top:189px;width:1px;height:39px;background:#afdce6;"></div>
<div class="r" style="left:570px;top:189px;width:1px;height:39px;background:#afdce6;"></div>
<div class="r" style="left:634px;top:189px;width:1px;height:39px;background:#afdce6;"></div>
<div class="r" style="left:693px;top:189px;width:1px;height:39px;background:#afdce6;"></div>
<div class="r" style="left:778px;top:189px;width:1px;height:39px;background:#afdce6;"></div>
<div class="r" style="left:838px;top:189px;width:1px;height:39px;background:#afdce6;"></div>
<div class="r" style="left:902px;top:189px;width:1px;height:39px;background:#afdce6;"></div>
<div class="r" style="left:951px;top:189px;width:1px;height:39px;background:#afdce6;"></div>
<div class="r" style="left:1019px;top:189px;width:1px;height:39px;background:#afdce6;"></div>
<div class="r" style="left:1068px;top:189px;width:1px;height:39px;background:#afdce6;"></div>
<div class="r" style="left:290px;top:189px;width:49px;height:1px;background:#c9e3d4;"></div>
<div class="r" style="left:339px;top:189px;width:70px;height:1px;background:#c9e3d4;"></div>
<div class="r" style="left:634px;top:189px;width:59px;height:1px;background:#c9e3d4;"></div>
<div class="r" style="left:693px;top:189px;width:85px;height:1px;background:#c9e3d4;"></div>
<div class="r" style="left:902px;top:189px;width:49px;height:1px;background:#c9e3d4;"></div>
<div class="r" style="left:951px;top:189px;width:68px;height:1px;background:#c9e3d4;"></div>
<div class="ico" style="left:18px;top:197px;width:9px;height:8.5px;border:1px solid #638f9b;"><div style="position:absolute;left:3.3px;top:1.8px;width:1.2px;height:3.4px;background:#638f9b"></div></div>
<div class="t n" style="left:37.00px;top:192.24px;font-size:12.3px;line-height:16.6px;font-weight:400;color:#15191b;transform:scaleX(0.935);transform-origin:0 0;">IRPF - Compensación GPP / RCM - Pérdida -</div>
<div class="t n" style="left:37.00px;top:208.84px;font-size:12.3px;line-height:16.6px;font-weight:400;color:#15191b;transform:scaleX(0.935);transform-origin:0 0;">Más 25%</div>
<div class="t n" style="right:770.00px;top:192.24px;font-size:12.3px;line-height:16.6px;font-weight:400;color:#15191b;transform:scaleX(0.935);transform-origin:100% 0">750</div>
<div class="t n" style="right:700.00px;top:192.24px;font-size:12.3px;line-height:16.6px;font-weight:400;color:#15191b;transform:scaleX(0.935);transform-origin:100% 0">750</div>
<div class="t n" style="right:416.00px;top:192.24px;font-size:12.3px;line-height:16.6px;font-weight:400;color:#15191b;transform:scaleX(0.935);transform-origin:100% 0">-5.000</div>
<div class="t n" style="right:331.00px;top:192.24px;font-size:12.3px;line-height:16.6px;font-weight:400;color:#15191b;transform:scaleX(0.935);transform-origin:100% 0">-5.000</div>
<div class="t n" style="right:158.00px;top:192.24px;font-size:12.3px;line-height:16.6px;font-weight:400;color:#15191b;transform:scaleX(0.935);transform-origin:100% 0">4.750</div>
<div class="t n" style="right:90.00px;top:192.24px;font-size:12.3px;line-height:16.6px;font-weight:400;color:#15191b;transform:scaleX(0.935);transform-origin:100% 0">4.750</div>
<div class="r" style="left:0px;top:228px;width:1132px;height:20px;background:#79c4da;"></div>
<div class="r" style="left:778px;top:228px;width:60px;height:20px;background:#bddcc9;"></div>
<div class="r" style="left:838px;top:228px;width:64px;height:20px;background:#bddcc9;"></div>
<div class="r" style="left:290px;top:228px;width:1px;height:20px;background:#afdce6;"></div>
<div class="r" style="left:339px;top:228px;width:1px;height:20px;background:#afdce6;"></div>
<div class="r" style="left:409px;top:228px;width:1px;height:20px;background:#afdce6;"></div>
<div class="r" style="left:458px;top:228px;width:1px;height:20px;background:#afdce6;"></div>
<div class="r" style="left:522px;top:228px;width:1px;height:20px;background:#afdce6;"></div>
<div class="r" style="left:570px;top:228px;width:1px;height:20px;background:#afdce6;"></div>
<div class="r" style="left:634px;top:228px;width:1px;height:20px;background:#afdce6;"></div>
<div class="r" style="left:693px;top:228px;width:1px;height:20px;background:#afdce6;"></div>
<div class="r" style="left:778px;top:228px;width:1px;height:20px;background:#afdce6;"></div>
<div class="r" style="left:838px;top:228px;width:1px;height:20px;background:#afdce6;"></div>
<div class="r" style="left:902px;top:228px;width:1px;height:20px;background:#afdce6;"></div>
<div class="r" style="left:951px;top:228px;width:1px;height:20px;background:#afdce6;"></div>
<div class="r" style="left:1019px;top:228px;width:1px;height:20px;background:#afdce6;"></div>
<div class="r" style="left:1068px;top:228px;width:1px;height:20px;background:#afdce6;"></div>
<div class="r" style="left:778px;top:228px;width:60px;height:1px;background:#c9e3d4;"></div>
<div class="r" style="left:838px;top:228px;width:64px;height:1px;background:#c9e3d4;"></div>
<div class="ico" style="left:18px;top:236px;width:9px;height:8.5px;border:1px solid #638f9b;"><div style="position:absolute;left:3.3px;top:1.8px;width:1.2px;height:3.4px;background:#638f9b"></div></div>
<div class="t n" style="left:37.00px;top:231.24px;font-size:12.3px;line-height:16.6px;font-weight:400;color:#15191b;transform:scaleX(0.935);transform-origin:0 0;">IRPF - Dividendo - Cobro</div>
<div class="t n" style="right:271.00px;top:231.24px;font-size:12.3px;line-height:16.6px;font-weight:400;color:#15191b;transform:scaleX(0.935);transform-origin:100% 0">95</div>
<div class="t n" style="right:207.00px;top:231.24px;font-size:12.3px;line-height:16.6px;font-weight:400;color:#15191b;transform:scaleX(0.935);transform-origin:100% 0">95</div>
<div class="r" style="left:0px;top:248px;width:1132px;height:21px;background:#a7d8e4;"></div>
<div class="r" style="left:0px;top:248px;width:1132px;height:1px;background:#b0dde9;"></div>
<div class="r" style="left:778px;top:248px;width:60px;height:21px;background:#bddcc9;"></div>
<div class="r" style="left:838px;top:248px;width:64px;height:21px;background:#bddcc9;"></div>
<div class="r" style="left:290px;top:248px;width:1px;height:21px;background:#afdce6;"></div>
<div class="r" style="left:339px;top:248px;width:1px;height:21px;background:#afdce6;"></div>
<div class="r" style="left:409px;top:248px;width:1px;height:21px;background:#afdce6;"></div>
<div class="r" style="left:458px;top:248px;width:1px;height:21px;background:#afdce6;"></div>
<div class="r" style="left:522px;top:248px;width:1px;height:21px;background:#afdce6;"></div>
<div class="r" style="left:570px;top:248px;width:1px;height:21px;background:#afdce6;"></div>
<div class="r" style="left:634px;top:248px;width:1px;height:21px;background:#afdce6;"></div>
<div class="r" style="left:693px;top:248px;width:1px;height:21px;background:#afdce6;"></div>
<div class="r" style="left:778px;top:248px;width:1px;height:21px;background:#afdce6;"></div>
<div class="r" style="left:838px;top:248px;width:1px;height:21px;background:#afdce6;"></div>
<div class="r" style="left:902px;top:248px;width:1px;height:21px;background:#afdce6;"></div>
<div class="r" style="left:951px;top:248px;width:1px;height:21px;background:#afdce6;"></div>
<div class="r" style="left:1019px;top:248px;width:1px;height:21px;background:#afdce6;"></div>
<div class="r" style="left:1068px;top:248px;width:1px;height:21px;background:#afdce6;"></div>
<div class="r" style="left:778px;top:248px;width:60px;height:1px;background:#c9e3d4;"></div>
<div class="r" style="left:838px;top:248px;width:64px;height:1px;background:#c9e3d4;"></div>
<div class="ico" style="left:18px;top:256px;width:9px;height:8.5px;border:1px solid #638f9b;"><div style="position:absolute;left:3.3px;top:1.8px;width:1.2px;height:3.4px;background:#638f9b"></div></div>
<div class="t n" style="left:37.00px;top:251.24px;font-size:12.3px;line-height:16.6px;font-weight:400;color:#15191b;transform:scaleX(0.935);transform-origin:0 0;">IRPF - Dividendo - Cobro en USA</div>
<div class="t n" style="right:271.00px;top:251.24px;font-size:12.3px;line-height:16.6px;font-weight:400;color:#15191b;transform:scaleX(0.935);transform-origin:100% 0">180,9524</div>
<div class="t n" style="right:207.00px;top:251.24px;font-size:12.3px;line-height:16.6px;font-weight:400;color:#15191b;transform:scaleX(0.935);transform-origin:100% 0">180,9524</div>
<div class="r" style="left:0px;top:269px;width:1132px;height:38px;background:#79c4da;"></div>
<div class="r" style="left:290px;top:269px;width:49px;height:38px;background:#bddcc9;"></div>
<div class="r" style="left:339px;top:269px;width:70px;height:38px;background:#bddcc9;"></div>
<div class="r" style="left:778px;top:269px;width:60px;height:38px;background:#bddcc9;"></div>
<div class="r" style="left:838px;top:269px;width:64px;height:38px;background:#bddcc9;"></div>
<div class="r" style="left:290px;top:269px;width:1px;height:38px;background:#afdce6;"></div>
<div class="r" style="left:339px;top:269px;width:1px;height:38px;background:#afdce6;"></div>
<div class="r" style="left:409px;top:269px;width:1px;height:38px;background:#afdce6;"></div>
<div class="r" style="left:458px;top:269px;width:1px;height:38px;background:#afdce6;"></div>
<div class="r" style="left:522px;top:269px;width:1px;height:38px;background:#afdce6;"></div>
<div class="r" style="left:570px;top:269px;width:1px;height:38px;background:#afdce6;"></div>
<div class="r" style="left:634px;top:269px;width:1px;height:38px;background:#afdce6;"></div>
<div class="r" style="left:693px;top:269px;width:1px;height:38px;background:#afdce6;"></div>
<div class="r" style="left:778px;top:269px;width:1px;height:38px;background:#afdce6;"></div>
<div class="r" style="left:838px;top:269px;width:1px;height:38px;background:#afdce6;"></div>
<div class="r" style="left:902px;top:269px;width:1px;height:38px;background:#afdce6;"></div>
<div class="r" style="left:951px;top:269px;width:1px;height:38px;background:#afdce6;"></div>
<div class="r" style="left:1019px;top:269px;width:1px;height:38px;background:#afdce6;"></div>
<div class="r" style="left:1068px;top:269px;width:1px;height:38px;background:#afdce6;"></div>
<div class="r" style="left:290px;top:269px;width:49px;height:1px;background:#c9e3d4;"></div>
<div class="r" style="left:339px;top:269px;width:70px;height:1px;background:#c9e3d4;"></div>
<div class="r" style="left:778px;top:269px;width:60px;height:1px;background:#c9e3d4;"></div>
<div class="r" style="left:838px;top:269px;width:64px;height:1px;background:#c9e3d4;"></div>
<div class="ico" style="left:18px;top:277px;width:9px;height:8.5px;border:1px solid #638f9b;"><div style="position:absolute;left:3.3px;top:1.8px;width:1.2px;height:3.4px;background:#638f9b"></div></div>
<div class="t n" style="left:37.00px;top:272.24px;font-size:12.3px;line-height:16.6px;font-weight:400;color:#15191b;transform:scaleX(0.935);transform-origin:0 0;">IRPF - Venta acciones - Beneficio - Compra</div>
<div class="t n" style="left:37.00px;top:288.84px;font-size:12.3px;line-height:16.6px;font-weight:400;color:#15191b;transform:scaleX(0.935);transform-origin:0 0;">Única</div>
<div class="t n" style="right:770.00px;top:272.24px;font-size:12.3px;line-height:16.6px;font-weight:400;color:#15191b;transform:scaleX(0.935);transform-origin:100% 0">490</div>
<div class="t n" style="right:700.00px;top:272.24px;font-size:12.3px;line-height:16.6px;font-weight:400;color:#15191b;transform:scaleX(0.935);transform-origin:100% 0">490</div>
<div class="t n" style="right:271.00px;top:272.24px;font-size:12.3px;line-height:16.6px;font-weight:400;color:#15191b;transform:scaleX(0.935);transform-origin:100% 0">93,1</div>
<div class="t n" style="right:207.00px;top:272.24px;font-size:12.3px;line-height:16.6px;font-weight:400;color:#15191b;transform:scaleX(0.935);transform-origin:100% 0">93,1</div>
<div class="r" style="left:0px;top:307px;width:1132px;height:37px;background:#a7d8e4;"></div>
<div class="r" style="left:0px;top:307px;width:1132px;height:1px;background:#b0dde9;"></div>
<div class="r" style="left:290px;top:307px;width:1px;height:37px;background:#afdce6;"></div>
<div class="r" style="left:339px;top:307px;width:1px;height:37px;background:#afdce6;"></div>
<div class="r" style="left:409px;top:307px;width:1px;height:37px;background:#afdce6;"></div>
<div class="r" style="left:458px;top:307px;width:1px;height:37px;background:#afdce6;"></div>
<div class="r" style="left:522px;top:307px;width:1px;height:37px;background:#afdce6;"></div>
<div class="r" style="left:570px;top:307px;width:1px;height:37px;background:#afdce6;"></div>
<div class="r" style="left:634px;top:307px;width:1px;height:37px;background:#afdce6;"></div>
<div class="r" style="left:693px;top:307px;width:1px;height:37px;background:#afdce6;"></div>
<div class="r" style="left:778px;top:307px;width:1px;height:37px;background:#afdce6;"></div>
<div class="r" style="left:838px;top:307px;width:1px;height:37px;background:#afdce6;"></div>
<div class="r" style="left:902px;top:307px;width:1px;height:37px;background:#afdce6;"></div>
<div class="r" style="left:951px;top:307px;width:1px;height:37px;background:#afdce6;"></div>
<div class="r" style="left:1019px;top:307px;width:1px;height:37px;background:#afdce6;"></div>
<div class="r" style="left:1068px;top:307px;width:1px;height:37px;background:#afdce6;"></div>
<div class="ico" style="left:18px;top:315px;width:9px;height:8.5px;border:1px solid #638f9b;"><div style="position:absolute;left:3.3px;top:1.8px;width:1.2px;height:3.4px;background:#638f9b"></div></div>
<div class="t n" style="left:37.00px;top:310.24px;font-size:12.3px;line-height:16.6px;font-weight:400;color:#15191b;transform:scaleX(0.935);transform-origin:0 0;">IRPF - Venta acciones - Beneficio - Compra</div>
<div class="t n" style="left:37.00px;top:326.84px;font-size:12.3px;line-height:16.6px;font-weight:400;color:#15191b;transform:scaleX(0.935);transform-origin:0 0;">Única - Año Sin venta</div>
<div class="r" style="left:0px;top:344px;width:1132px;height:37px;background:#79c4da;"></div>
<div class="r" style="left:634px;top:344px;width:59px;height:37px;background:#bddcc9;"></div>
<div class="r" style="left:693px;top:344px;width:85px;height:37px;background:#bddcc9;"></div>
<div class="r" style="left:778px;top:344px;width:60px;height:37px;background:#bddcc9;"></div>
<div class="r" style="left:838px;top:344px;width:64px;height:37px;background:#bddcc9;"></div>
<div class="r" style="left:290px;top:344px;width:1px;height:37px;background:#afdce6;"></div>
<div class="r" style="left:339px;top:344px;width:1px;height:37px;background:#afdce6;"></div>
<div class="r" style="left:409px;top:344px;width:1px;height:37px;background:#afdce6;"></div>
<div class="r" style="left:458px;top:344px;width:1px;height:37px;background:#afdce6;"></div>
<div class="r" style="left:522px;top:344px;width:1px;height:37px;background:#afdce6;"></div>
<div class="r" style="left:570px;top:344px;width:1px;height:37px;background:#afdce6;"></div>
<div class="r" style="left:634px;top:344px;width:1px;height:37px;background:#afdce6;"></div>
<div class="r" style="left:693px;top:344px;width:1px;height:37px;background:#afdce6;"></div>
<div class="r" style="left:778px;top:344px;width:1px;height:37px;background:#afdce6;"></div>
<div class="r" style="left:838px;top:344px;width:1px;height:37px;background:#afdce6;"></div>
<div class="r" style="left:902px;top:344px;width:1px;height:37px;background:#afdce6;"></div>
<div class="r" style="left:951px;top:344px;width:1px;height:37px;background:#afdce6;"></div>
<div class="r" style="left:1019px;top:344px;width:1px;height:37px;background:#afdce6;"></div>
<div class="r" style="left:1068px;top:344px;width:1px;height:37px;background:#afdce6;"></div>
<div class="r" style="left:634px;top:344px;width:59px;height:1px;background:#c9e3d4;"></div>
<div class="r" style="left:693px;top:344px;width:85px;height:1px;background:#c9e3d4;"></div>
<div class="r" style="left:778px;top:344px;width:60px;height:1px;background:#c9e3d4;"></div>
<div class="r" style="left:838px;top:344px;width:64px;height:1px;background:#c9e3d4;"></div>
<div class="ico" style="left:18px;top:352px;width:9px;height:8.5px;border:1px solid #638f9b;"><div style="position:absolute;left:3.3px;top:1.8px;width:1.2px;height:3.4px;background:#638f9b"></div></div>
<div class="t n" style="left:37.00px;top:347.24px;font-size:12.3px;line-height:16.6px;font-weight:400;color:#15191b;transform:scaleX(0.935);transform-origin:0 0;">IRPF - Venta Acciones - Beneficios Compra</div>
<div class="t n" style="left:37.00px;top:363.84px;font-size:12.3px;line-height:16.6px;font-weight:400;color:#15191b;transform:scaleX(0.935);transform-origin:0 0;">Múltiple</div>
<div class="t n" style="right:416.00px;top:347.24px;font-size:12.3px;line-height:16.6px;font-weight:400;color:#15191b;transform:scaleX(0.935);transform-origin:100% 0">634,5</div>
<div class="t n" style="right:331.00px;top:347.24px;font-size:12.3px;line-height:16.6px;font-weight:400;color:#15191b;transform:scaleX(0.935);transform-origin:100% 0">634,5</div>
<div class="t n" style="right:271.00px;top:347.24px;font-size:12.3px;line-height:16.6px;font-weight:400;color:#15191b;transform:scaleX(0.935);transform-origin:100% 0">120,555</div>
<div class="t n" style="right:207.00px;top:347.24px;font-size:12.3px;line-height:16.6px;font-weight:400;color:#15191b;transform:scaleX(0.935);transform-origin:100% 0">120,555</div>
<div class="r" style="left:0px;top:381px;width:1132px;height:22px;background:#a7d8e4;"></div>
<div class="r" style="left:0px;top:381px;width:1132px;height:1px;background:#b0dde9;"></div>
<div class="r" style="left:634px;top:381px;width:59px;height:22px;background:#bddcc9;"></div>
<div class="r" style="left:693px;top:381px;width:85px;height:22px;background:#bddcc9;"></div>
<div class="r" style="left:838px;top:381px;width:64px;height:22px;background:#bddcc9;"></div>
<div class="r" style="left:290px;top:381px;width:1px;height:22px;background:#afdce6;"></div>
<div class="r" style="left:339px;top:381px;width:1px;height:22px;background:#afdce6;"></div>
<div class="r" style="left:409px;top:381px;width:1px;height:22px;background:#afdce6;"></div>
<div class="r" style="left:458px;top:381px;width:1px;height:22px;background:#afdce6;"></div>
<div class="r" style="left:522px;top:381px;width:1px;height:22px;background:#afdce6;"></div>
<div class="r" style="left:570px;top:381px;width:1px;height:22px;background:#afdce6;"></div>
<div class="r" style="left:634px;top:381px;width:1px;height:22px;background:#afdce6;"></div>
<div class="r" style="left:693px;top:381px;width:1px;height:22px;background:#afdce6;"></div>
<div class="r" style="left:778px;top:381px;width:1px;height:22px;background:#afdce6;"></div>
<div class="r" style="left:838px;top:381px;width:1px;height:22px;background:#afdce6;"></div>
<div class="r" style="left:902px;top:381px;width:1px;height:22px;background:#afdce6;"></div>
<div class="r" style="left:951px;top:381px;width:1px;height:22px;background:#afdce6;"></div>
<div class="r" style="left:1019px;top:381px;width:1px;height:22px;background:#afdce6;"></div>
<div class="r" style="left:1068px;top:381px;width:1px;height:22px;background:#afdce6;"></div>
<div class="r" style="left:634px;top:381px;width:59px;height:1px;background:#c9e3d4;"></div>
<div class="r" style="left:693px;top:381px;width:85px;height:1px;background:#c9e3d4;"></div>
<div class="r" style="left:838px;top:381px;width:64px;height:1px;background:#c9e3d4;"></div>
<div class="ico" style="left:18px;top:389px;width:9px;height:8.5px;border:1px solid #638f9b;"><div style="position:absolute;left:3.3px;top:1.8px;width:1.2px;height:3.4px;background:#638f9b"></div></div>
<div class="t n" style="left:37.00px;top:384.24px;font-size:12.3px;line-height:16.6px;font-weight:400;color:#15191b;transform:scaleX(0.935);transform-origin:0 0;">IRPF - Venta acciones - Pérdida - Compra Única</div>
<div class="t n" style="right:416.00px;top:384.24px;font-size:12.3px;line-height:16.6px;font-weight:400;color:#15191b;transform:scaleX(0.935);transform-origin:100% 0">-406</div>
<div class="t n" style="right:331.00px;top:384.24px;font-size:12.3px;line-height:16.6px;font-weight:400;color:#15191b;transform:scaleX(0.935);transform-origin:100% 0">-406</div>
<div class="t n" style="right:207.00px;top:384.24px;font-size:12.3px;line-height:16.6px;font-weight:400;color:#15191b;transform:scaleX(0.935);transform-origin:100% 0">0</div>
<div class="r" style="left:0px;top:403px;width:1132px;height:20px;background:#79c4da;"></div>
<div class="r" style="left:634px;top:403px;width:59px;height:20px;background:#bddcc9;"></div>
<div class="r" style="left:693px;top:403px;width:85px;height:20px;background:#bddcc9;"></div>
<div class="r" style="left:838px;top:403px;width:64px;height:20px;background:#bddcc9;"></div>
<div class="r" style="left:290px;top:403px;width:1px;height:20px;background:#afdce6;"></div>
<div class="r" style="left:339px;top:403px;width:1px;height:20px;background:#afdce6;"></div>
<div class="r" style="left:409px;top:403px;width:1px;height:20px;background:#afdce6;"></div>
<div class="r" style="left:458px;top:403px;width:1px;height:20px;background:#afdce6;"></div>
<div class="r" style="left:522px;top:403px;width:1px;height:20px;background:#afdce6;"></div>
<div class="r" style="left:570px;top:403px;width:1px;height:20px;background:#afdce6;"></div>
<div class="r" style="left:634px;top:403px;width:1px;height:20px;background:#afdce6;"></div>
<div class="r" style="left:693px;top:403px;width:1px;height:20px;background:#afdce6;"></div>
<div class="r" style="left:778px;top:403px;width:1px;height:20px;background:#afdce6;"></div>
<div class="r" style="left:838px;top:403px;width:1px;height:20px;background:#afdce6;"></div>
<div class="r" style="left:902px;top:403px;width:1px;height:20px;background:#afdce6;"></div>
<div class="r" style="left:951px;top:403px;width:1px;height:20px;background:#afdce6;"></div>
<div class="r" style="left:1019px;top:403px;width:1px;height:20px;background:#afdce6;"></div>
<div class="r" style="left:1068px;top:403px;width:1px;height:20px;background:#afdce6;"></div>
<div class="r" style="left:634px;top:403px;width:59px;height:1px;background:#c9e3d4;"></div>
<div class="r" style="left:693px;top:403px;width:85px;height:1px;background:#c9e3d4;"></div>
<div class="r" style="left:838px;top:403px;width:64px;height:1px;background:#c9e3d4;"></div>
<div class="ico" style="left:18px;top:411px;width:9px;height:8.5px;border:1px solid #638f9b;"><div style="position:absolute;left:3.3px;top:1.8px;width:1.2px;height:3.4px;background:#638f9b"></div></div>
<div class="t n" style="left:37.00px;top:406.24px;font-size:12.3px;line-height:16.6px;font-weight:400;color:#15191b;transform:scaleX(0.935);transform-origin:0 0;">IRPF - Venta Acciones - Pérdida Cambio Divisa</div>
<div class="t n" style="right:416.00px;top:406.24px;font-size:12.3px;line-height:16.6px;font-weight:400;color:#15191b;transform:scaleX(0.935);transform-origin:100% 0">-89,2832</div>
<div class="t n" style="right:331.00px;top:406.24px;font-size:12.3px;line-height:16.6px;font-weight:400;color:#15191b;transform:scaleX(0.935);transform-origin:100% 0">-89,2832</div>
<div class="t n" style="right:207.00px;top:406.24px;font-size:12.3px;line-height:16.6px;font-weight:400;color:#15191b;transform:scaleX(0.935);transform-origin:100% 0">0</div>
<div class="r" style="left:0px;top:423px;width:1132px;height:38px;background:#a7d8e4;"></div>
<div class="r" style="left:0px;top:423px;width:1132px;height:1px;background:#b0dde9;"></div>
<div class="r" style="left:634px;top:423px;width:59px;height:38px;background:#bddcc9;"></div>
<div class="r" style="left:693px;top:423px;width:85px;height:38px;background:#bddcc9;"></div>
<div class="r" style="left:778px;top:423px;width:60px;height:38px;background:#bddcc9;"></div>
<div class="r" style="left:838px;top:423px;width:64px;height:38px;background:#bddcc9;"></div>
<div class="r" style="left:290px;top:423px;width:1px;height:38px;background:#afdce6;"></div>
<div class="r" style="left:339px;top:423px;width:1px;height:38px;background:#afdce6;"></div>
<div class="r" style="left:409px;top:423px;width:1px;height:38px;background:#afdce6;"></div>
<div class="r" style="left:458px;top:423px;width:1px;height:38px;background:#afdce6;"></div>
<div class="r" style="left:522px;top:423px;width:1px;height:38px;background:#afdce6;"></div>
<div class="r" style="left:570px;top:423px;width:1px;height:38px;background:#afdce6;"></div>
<div class="r" style="left:634px;top:423px;width:1px;height:38px;background:#afdce6;"></div>
<div class="r" style="left:693px;top:423px;width:1px;height:38px;background:#afdce6;"></div>
<div class="r" style="left:778px;top:423px;width:1px;height:38px;background:#afdce6;"></div>
<div class="r" style="left:838px;top:423px;width:1px;height:38px;background:#afdce6;"></div>
<div class="r" style="left:902px;top:423px;width:1px;height:38px;background:#afdce6;"></div>
<div class="r" style="left:951px;top:423px;width:1px;height:38px;background:#afdce6;"></div>
<div class="r" style="left:1019px;top:423px;width:1px;height:38px;background:#afdce6;"></div>
<div class="r" style="left:1068px;top:423px;width:1px;height:38px;background:#afdce6;"></div>
<div class="r" style="left:634px;top:423px;width:59px;height:1px;background:#c9e3d4;"></div>
<div class="r" style="left:693px;top:423px;width:85px;height:1px;background:#c9e3d4;"></div>
<div class="r" style="left:778px;top:423px;width:60px;height:1px;background:#c9e3d4;"></div>
<div class="r" style="left:838px;top:423px;width:64px;height:1px;background:#c9e3d4;"></div>
<div class="ico" style="left:18px;top:431px;width:9px;height:8.5px;border:1px solid #638f9b;"><div style="position:absolute;left:3.3px;top:1.8px;width:1.2px;height:3.4px;background:#638f9b"></div></div>
<div class="t n" style="left:37.00px;top:426.24px;font-size:12.3px;line-height:16.6px;font-weight:400;color:#15191b;transform:scaleX(0.935);transform-origin:0 0;">IRPF - Venta Fondo de Inversión - Beneficios</div>
<div class="t n" style="left:37.00px;top:442.84px;font-size:12.3px;line-height:16.6px;font-weight:400;color:#15191b;transform:scaleX(0.935);transform-origin:0 0;">Compra Múltiple</div>
<div class="t n" style="right:416.00px;top:426.24px;font-size:12.3px;line-height:16.6px;font-weight:400;color:#15191b;transform:scaleX(0.935);transform-origin:100% 0">1.975</div>
<div class="t n" style="right:331.00px;top:426.24px;font-size:12.3px;line-height:16.6px;font-weight:400;color:#15191b;transform:scaleX(0.935);transform-origin:100% 0">1.975</div>
<div class="t n" style="right:271.00px;top:426.24px;font-size:12.3px;line-height:16.6px;font-weight:400;color:#15191b;transform:scaleX(0.935);transform-origin:100% 0">384,75</div>
<div class="t n" style="right:207.00px;top:426.24px;font-size:12.3px;line-height:16.6px;font-weight:400;color:#15191b;transform:scaleX(0.935);transform-origin:100% 0">384,75</div>
<div class="r" style="left:0px;top:461px;width:1132px;height:21px;background:#79c4da;"></div>
<div class="r" style="left:290px;top:461px;width:1px;height:21px;background:#afdce6;"></div>
<div class="r" style="left:339px;top:461px;width:1px;height:21px;background:#afdce6;"></div>
<div class="r" style="left:409px;top:461px;width:1px;height:21px;background:#afdce6;"></div>
<div class="r" style="left:458px;top:461px;width:1px;height:21px;background:#afdce6;"></div>
<div class="r" style="left:522px;top:461px;width:1px;height:21px;background:#afdce6;"></div>
<div class="r" style="left:570px;top:461px;width:1px;height:21px;background:#afdce6;"></div>
<div class="r" style="left:634px;top:461px;width:1px;height:21px;background:#afdce6;"></div>
<div class="r" style="left:693px;top:461px;width:1px;height:21px;background:#afdce6;"></div>
<div class="r" style="left:778px;top:461px;width:1px;height:21px;background:#afdce6;"></div>
<div class="r" style="left:838px;top:461px;width:1px;height:21px;background:#afdce6;"></div>
<div class="r" style="left:902px;top:461px;width:1px;height:21px;background:#afdce6;"></div>
<div class="r" style="left:951px;top:461px;width:1px;height:21px;background:#afdce6;"></div>
<div class="r" style="left:1019px;top:461px;width:1px;height:21px;background:#afdce6;"></div>
<div class="r" style="left:1068px;top:461px;width:1px;height:21px;background:#afdce6;"></div>
<div class="ico" style="left:7px;top:469px;width:9.5px;height:9px;border:1.4px solid #4f7b87;border-radius:2.5px;"><div style="position:absolute;left:0.8px;top:2.4px;width:5px;height:2px;background:#4f7b87"></div></div>
<div class="t" style="left:26.00px;top:464.24px;font-size:12.3px;line-height:16.6px;font-weight:700;color:#17384a;transform:scaleX(0.935);transform-origin:0 0;">Saldo</div>
<div class="r" style="left:0px;top:482px;width:1132px;height:22px;background:#a7d8e4;"></div>
<div class="r" style="left:0px;top:482px;width:1132px;height:1px;background:#b0dde9;"></div>
<div class="r" style="left:290px;top:482px;width:1px;height:22px;background:#afdce6;"></div>
<div class="r" style="left:339px;top:482px;width:1px;height:22px;background:#afdce6;"></div>
<div class="r" style="left:409px;top:482px;width:1px;height:22px;background:#afdce6;"></div>
<div class="r" style="left:458px;top:482px;width:1px;height:22px;background:#afdce6;"></div>
<div class="r" style="left:522px;top:482px;width:1px;height:22px;background:#afdce6;"></div>
<div class="r" style="left:570px;top:482px;width:1px;height:22px;background:#afdce6;"></div>
<div class="r" style="left:634px;top:482px;width:1px;height:22px;background:#afdce6;"></div>
<div class="r" style="left:693px;top:482px;width:1px;height:22px;background:#afdce6;"></div>
<div class="r" style="left:778px;top:482px;width:1px;height:22px;background:#afdce6;"></div>
<div class="r" style="left:838px;top:482px;width:1px;height:22px;background:#afdce6;"></div>
<div class="r" style="left:902px;top:482px;width:1px;height:22px;background:#afdce6;"></div>
<div class="r" style="left:951px;top:482px;width:1px;height:22px;background:#afdce6;"></div>
<div class="r" style="left:1019px;top:482px;width:1px;height:22px;background:#afdce6;"></div>
<div class="r" style="left:1068px;top:482px;width:1px;height:22px;background:#afdce6;"></div>
<div class="ico" style="left:18px;top:490px;width:9px;height:8.5px;border:1px solid #638f9b;"><div style="position:absolute;left:3.3px;top:1.8px;width:1.2px;height:3.4px;background:#638f9b"></div></div>
<div class="t n" style="left:37.00px;top:485.24px;font-size:12.3px;line-height:16.6px;font-weight:400;color:#15191b;transform:scaleX(0.935);transform-origin:0 0;">Saldo / Inversión Básico</div>
</div>
<div class="r" style="left:288px;top:757px;width:1103px;height:16px;background:#fbfdfd;"></div>
<div class="r" style="left:289px;top:762px;width:249px;height:7px;background:#a8a8a8;border-radius:4px"></div>
<div class="r" style="left:1412px;top:0;width:1px;height:794px;background:repeating-linear-gradient(to bottom,#444 0 2px,#fff 2px 4px)"></div>
<div class="r" style="left:0;top:793px;width:1413px;height:1px;background:repeating-linear-gradient(to right,#444 0 2px,#fff 2px 4px)"></div>
</body></html>
